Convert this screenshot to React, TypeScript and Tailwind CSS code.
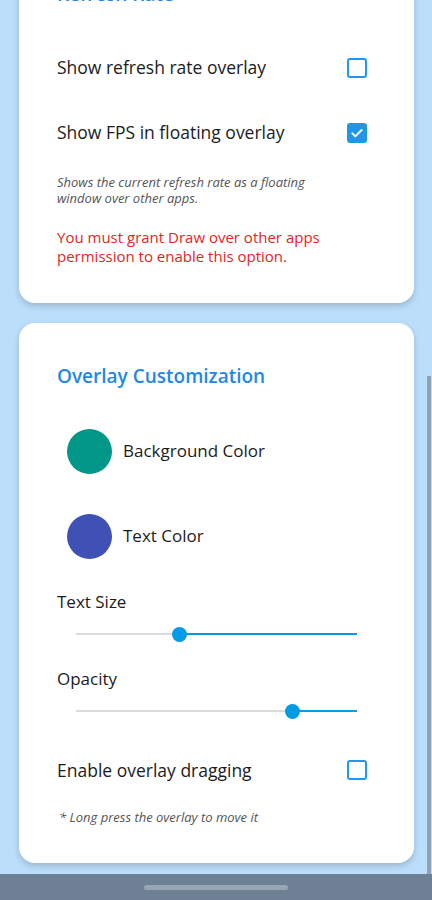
import React from 'react';

const font = { fontFamily: '"Open Sans", "Noto Sans", sans-serif' };

const CheckBox = ({ checked }: { checked: boolean }) =>
  checked ? (
    <div className="w-5 h-5 rounded-[3px] bg-[#1e96ea] flex items-center justify-center">
      <svg viewBox="0 0 24 24" className="w-4 h-4" fill="none" stroke="white" strokeWidth="3" strokeLinecap="round" strokeLinejoin="round">
        <path d="M5 12.5l4.5 4.5L19 7.5" />
      </svg>
    </div>
  ) : (
    <div className="w-5 h-5 rounded-[3px] border-2 border-[#2196f3]" />
  );

const Slider = ({ pos }: { pos: number }) => (
  <div className="mt-[7px] h-[28px] ml-[19px] mr-[10px] relative flex items-center">
    <div className="h-[2px] bg-[#dadada]" style={{ width: `${pos}px` }} />
    <div className="h-[2px] flex-1 bg-[#039be5]" />
    {/* thumb */}
    <div className="absolute w-[15px] h-[15px] rounded-full bg-[#039be5] top-[6.5px]" style={{ left: `${pos - 7.5}px` }} />
  </div>
);

export default function App() {
  return (
    <div className="w-[432px] h-[900px] bg-[#bbdefb] relative overflow-hidden flex flex-col" style={font}>
      <div className="flex-1 pl-[19px] pr-[18px] text-[#1b1b1b]">
        {/* Refresh rate card, scrolled partly out of view */}
        <div className="mt-[-40px] bg-white rounded-2xl shadow-[0_3px_6px_rgba(0,0,0,0.18)] pt-[21px] pb-[37px] pl-[38px] pr-[47px]">
          <h2 className="text-[19px] leading-[26px] font-semibold text-[#1e88e5]">Refresh Rate</h2>
          <div className="mt-[28px]">
            <div className="h-[65px] flex items-center justify-between">
              <span className="text-[17.5px]">Show refresh rate overlay</span>
              <CheckBox checked={false} />
            </div>
            <div className="h-[65px] flex items-center justify-between">
              <span className="text-[17.5px]">Show FPS in floating overlay</span>
              <CheckBox checked />
            </div>
          </div>
          <p className="mt-[9px] text-[13px] leading-[16px] italic text-[#555] max-w-[280px]">
            Shows the current refresh rate as a floating window over other apps.
          </p>
          <p className="mt-[22px] text-[15px] leading-[19px] text-[#e3261f] max-w-[290px]">
            You must grant Draw over other apps permission to enable this option.
          </p>
        </div>

        {/* Overlay customization card */}
        <div className="mt-[20px] bg-white rounded-2xl shadow-[0_3px_6px_rgba(0,0,0,0.18)] pt-[40px] pb-[38px] pl-[38px] pr-[47px]">
          <h2 className="text-[19px] leading-[26px] font-semibold text-[#1e88e5]">Overlay Customization</h2>
          <div className="mt-[19.5px]">
            <div className="h-[85px] flex items-center">
              <div className="ml-[10px] w-[45px] h-[45px] rounded-full bg-[#009688]" />
              <span className="ml-[11px] text-[17px]">Background Color</span>
            </div>
            <div className="h-[85px] flex items-center">
              <div className="ml-[10px] w-[45px] h-[45px] rounded-full bg-[#3f51b5]" />
              <span className="ml-[11px] text-[17px]">Text Color</span>
            </div>
          </div>
          <div className="mt-[12.5px] text-[17px] leading-[22px]">Text Size</div>
          <Slider pos={103} />
          <div className="mt-[20px] text-[17px] leading-[22px]">Opacity</div>
          <Slider pos={216} />
          <div className="mt-[21px] h-[48px] flex items-center justify-between">
            <span className="text-[17.5px]">Enable overlay dragging</span>
            <CheckBox checked={false} />
          </div>
          <p className="mt-[15px] ml-[2px] text-[13px] leading-[16px] italic text-[#555]">* Long press the overlay to move it</p>
        </div>
      </div>

      {/* scroll indicator */}
      <div className="absolute right-[1px] top-[376px] w-[4px] h-[498px] bg-[#8fa1b4]" />

      {/* system nav bar */}
      <div className="h-[26px] bg-[#6e8194] flex items-center justify-center shrink-0">
        <div className="w-[144px] h-[5px] rounded-full bg-[#98a6b3]" />
      </div>
    </div>
  );
}
